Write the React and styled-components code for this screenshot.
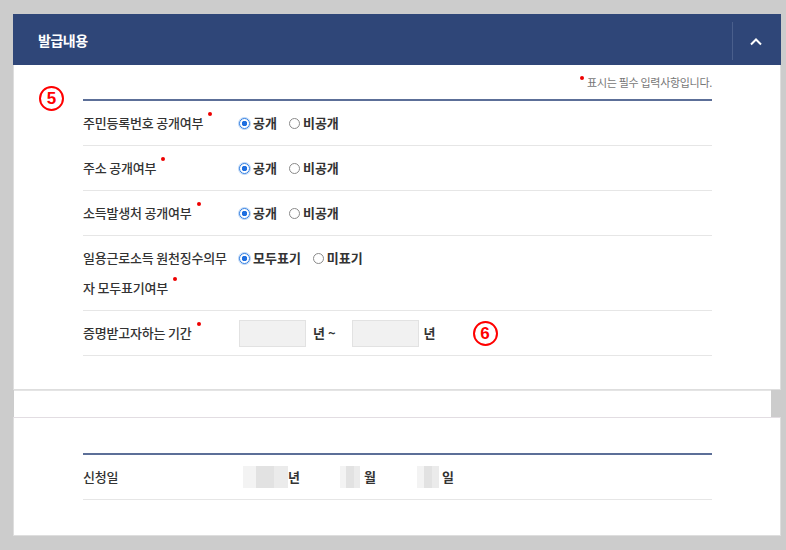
import React from "react";
import styled, { createGlobalStyle } from "styled-components";

const GlobalStyle = createGlobalStyle`
  html, body {
    margin: 0;
    padding: 0;
    background: #cccccc;
    font-family: "Noto Sans CJK KR", "Noto Sans", sans-serif;
    color: #333;
  }
`;

const Page = styled.div`
  margin: 14px 0 0 14px;
  width: 757px;
  background: #fff;
`;

const Panel = styled.section`
  width: 768px;
  margin-left: -1px;
  border: 1px solid #dedede;
  border-top: ${(p) => (p.$flat ? "1px solid #e2dde2" : "none")};
  background: #fff;
  box-sizing: border-box;
`;

const Header = styled.div`
  display: flex;
  align-items: stretch;
  height: 51px;
  background: #2f4678;
  margin: 0 -1px;
`;

const Title = styled.h2`
  flex: 1;
  margin: 0;
  padding-left: 25px;
  display: flex;
  align-items: center;
  font-size: 14px;
  font-weight: 700;
  color: #fff;
  letter-spacing: -0.5px;
`;

const Toggle = styled.div`
  width: 46px;
  margin: 8px 0 5px;
  border-left: 1px solid #4a5f8c;
  display: flex;
  align-items: center;
  justify-content: center;
  padding-right: 2px;
`;

const Body = styled.div`
  position: relative;
  padding: ${(p) => p.$pad};
`;

const Note = styled.div`
  text-align: right;
  font-size: 11px;
  line-height: 14px;
  color: #777;
  margin-bottom: 10px;
  letter-spacing: -0.3px;
`;

const NoteDot = styled.span`
  display: inline-block;
  width: 4px;
  height: 4px;
  border-radius: 50%;
  background: #e00;
  margin-right: 3px;
  vertical-align: 7px;
`;

const Table = styled.div`
  border-top: 2px solid #5c6f98;
`;

const Row = styled.div`
  display: flex;
  align-items: flex-start;
  padding: 7px 0;
  border-bottom: 1px solid #e6e6e6;
  font-size: 13px;
  line-height: 30px;
`;

const Label = styled.div`
  width: 150px;
  margin-right: 6px;
  flex-shrink: 0;
  color: #333;
  font-weight: 500;
  letter-spacing: -0.2px;
`;

const Req = styled.span`
  display: inline-block;
  width: 4px;
  height: 4px;
  border-radius: 50%;
  background: #e00;
  margin-left: 5px;
  vertical-align: 12px;
`;

const Options = styled.div`
  display: flex;
  align-items: center;
  gap: 12px;
  height: 30px;
`;

const Option = styled.label`
  display: flex;
  align-items: center;
  gap: 3px;
  font-weight: 700;
  color: #333;
`;

const Radio = styled.span`
  width: 11px;
  height: 11px;
  box-sizing: border-box;
  border-radius: 50%;
  border: 1px solid ${(p) => (p.$on ? "#2f7de1" : "#8a8a8a")};
  background: ${(p) =>
    p.$on ? "radial-gradient(circle, #1f6fe0 0 2.5px, #fff 3px)" : "#fff"};
  box-shadow: ${(p) => (p.$on ? "0 0 0 1px #bcd6f6" : "none")};
`;

const Value = styled.div`
  display: flex;
  align-items: center;
  height: 30px;
`;

const YearInput = styled.span`
  display: inline-block;
  width: 67px;
  height: 27px;
  box-sizing: border-box;
  border: 1px solid #e2e2e2;
  background: #f1f1f1;
`;

const Unit = styled.span`
  font-weight: 700;
  margin-left: ${(p) => p.$ml || 0}px;
  margin-right: ${(p) => p.$mr || 0}px;
`;

const Circled = styled.span`
  display: inline-flex;
  align-items: center;
  justify-content: center;
  width: 25px;
  height: 25px;
  box-sizing: border-box;
  border: 2px solid #f00;
  border-radius: 50%;
  color: #f00;
  font-family: "Liberation Sans", Arial, sans-serif;
  font-weight: 700;
  font-size: 17px;
  line-height: 1;
  margin-left: ${(p) => p.$ml || 0}px;
`;

const Marker = styled(Circled)`
  position: absolute;
  left: 25px;
  top: 21px;
`;

const Gap = styled.div`
  height: 26px;
  background: #fff;
  border-top: 1px solid #e4e4e4;
`;

const Masked = styled.span`
  display: inline-block;
  width: ${(p) => p.$w}px;
  height: 22px;
  margin-left: ${(p) => p.$ml || 0}px;
  margin-right: ${(p) => p.$mr || 0}px;
  background: linear-gradient(90deg, #f3f3f3 0 30%, #e2e2e2 30% 70%, #ebebeb 70%);
`;

const Chevron = () => (
  <svg width="14" height="9" viewBox="0 0 14 9">
    <path d="M2 7.5 L7 2.5 L12 7.5" fill="none" stroke="#fff" strokeWidth="2" />
  </svg>
);

const RadioGroup = ({ items }) => (
  <Options>
    {items.map((t, i) => (
      <Option key={t}>
        <Radio $on={i === 0} />
        {t}
      </Option>
    ))}
  </Options>
);

const rows = [
  { label: "주민등록번호 공개여부", items: ["공개", "비공개"] },
  { label: "주소 공개여부", items: ["공개", "비공개"] },
  { label: "소득발생처 공개여부", items: ["공개", "비공개"] },
  { label: "일용근로소득 원천징수의무자 모두표기여부", items: ["모두표기", "미표기"] },
];

export default function App() {
  return (
    <>
      <GlobalStyle />
      <Page>
        <Panel>
          <Header>
            <Title>발급내용</Title>
            <Toggle>
              <Chevron />
            </Toggle>
          </Header>
          <Body $pad="10px 68px 33px 69px">
            <Marker>5</Marker>
            <Note>
              <NoteDot />
              표시는 필수 입력사항입니다.
            </Note>
            <Table>
              {rows.map((r) => (
                <Row key={r.label}>
                  <Label>
                    {r.label}
                    <Req />
                  </Label>
                  <RadioGroup items={r.items} />
                </Row>
              ))}
              <Row>
                <Label>
                  증명받고자하는 기간
                  <Req />
                </Label>
                <Value>
                  <YearInput />
                  <Unit $ml={7} $mr={16}>년 ~</Unit>
                  <YearInput />
                  <Unit $ml={5}>년</Unit>
                  <Circled $ml={37}>6</Circled>
                </Value>
              </Row>
            </Table>
          </Body>
        </Panel>
        <Gap />
        <Panel $flat>
          <Body $pad="35px 68px 35px 69px">
            <Table>
              <Row>
                <Label>신청일</Label>
                <Value>
                  <Masked $w={45} $ml={4} />
                  <Unit $mr={40}>년</Unit>
                  <Masked $w={20} $mr={4} />
                  <Unit $mr={41}>월</Unit>
                  <Masked $w={22} $mr={3} />
                  <Unit>일</Unit>
                </Value>
              </Row>
            </Table>
          </Body>
        </Panel>
      </Page>
    </>
  );
}
